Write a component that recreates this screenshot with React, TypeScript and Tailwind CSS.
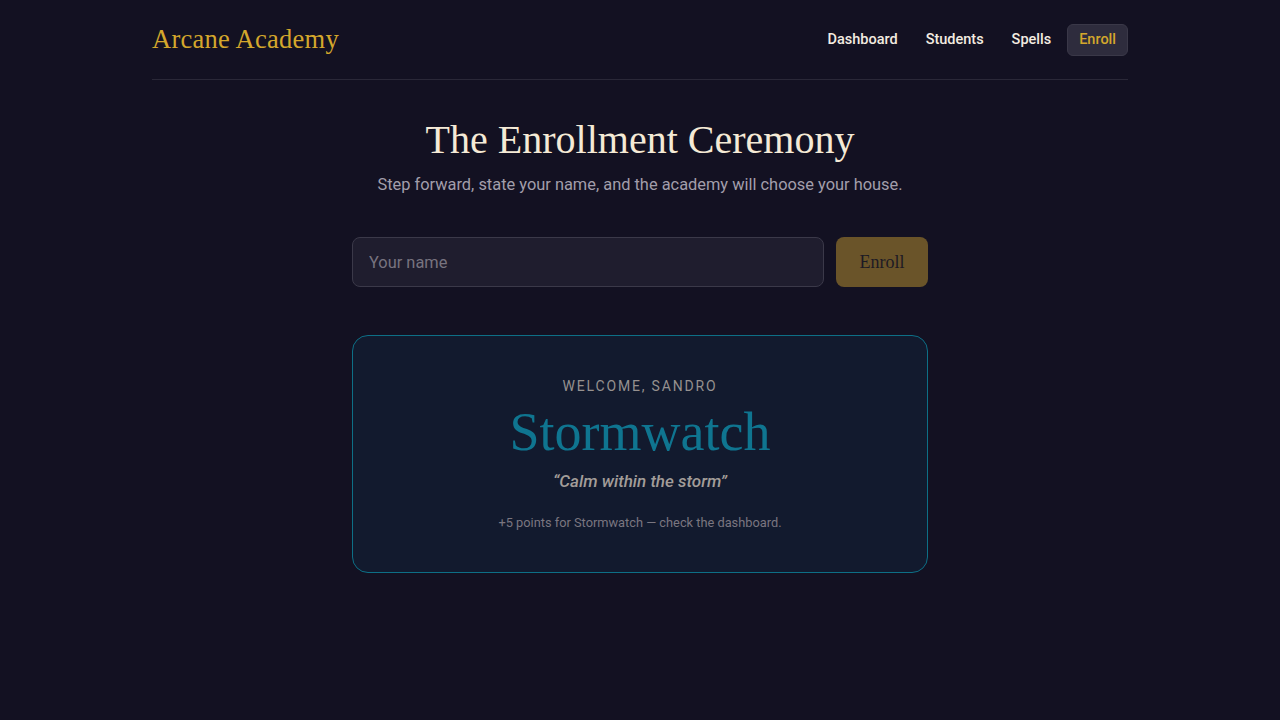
const serif = "font-['Liberation_Serif','DejaVu_Serif',serif]";

export default function App() {
  return (
    <div className="min-h-screen bg-[#131122] font-['Roboto','Liberation_Sans',sans-serif]">
      <div className="mx-auto w-[976px]">
        <header className="flex h-20 items-center justify-between border-b border-[#2a2838]">
          <a className={`${serif} text-[26.5px] tracking-[0.01em] text-[#d4a72c]`}>Arcane Academy</a>
          <nav className="flex items-center text-[14.5px] leading-5 font-medium">
            <a className="rounded-md px-3.5 py-1.5 text-[#f3ece0]">Dashboard</a>
            <a className="rounded-md px-3.5 py-1.5 text-[#f3ece0]">Students</a>
            <a className="rounded-md px-3.5 py-1.5 text-[#f3ece0]">Spells</a>
            <a className="ml-0.5 rounded-md border border-[#3a3848] bg-[#2e2c3d] px-[11px] py-[5px] text-[#d4a72c]">Enroll</a>
          </nav>
        </header>

        <main className="flex flex-col items-center pt-[35px]">
          <h1 className={`${serif} text-[40px] leading-tight text-[#f5ead6]`}>The Enrollment Ceremony</h1>
          <p className="mt-2 text-[16.4px] leading-6 text-[#a29eab]">
            Step forward, state your name, and the academy will choose your house.
          </p>

          <form className="mt-10 flex w-[576px] gap-3" onSubmit={e => e.preventDefault()}>
            <input
              placeholder="Your name"
              className="h-[50px] flex-1 rounded-lg border border-[#3b3949] bg-[#1f1d2e] px-4 text-[16.4px] text-[#f3ece0] placeholder:text-[#77737f] outline-none"
            />
            <button className={`${serif} h-[50px] w-[92px] rounded-lg bg-[#6a5429] text-lg text-[#1d1a24]`}>
              Enroll
            </button>
          </form>

          <section className="mt-12 flex h-[238px] w-[576px] flex-col items-center rounded-2xl border border-[#0d6f86] bg-[#121a2e] pt-10">
            <p className="text-sm tracking-[0.13em] text-[#96918f]">WELCOME, SANDRO</p>
            <h2 className={`${serif} mt-1 text-[54px] leading-[1.2] text-[#0f7590]`}>Stormwatch</h2>
            <p className="mt-1 text-[17px] leading-6 font-medium italic text-[#a29d99]">“Calm within the storm”</p>
            <p className="mt-5 text-[12.8px] leading-5 text-[#7a7680]">+5 points for Stormwatch — check the dashboard.</p>
          </section>
        </main>
      </div>
    </div>
  );
}
